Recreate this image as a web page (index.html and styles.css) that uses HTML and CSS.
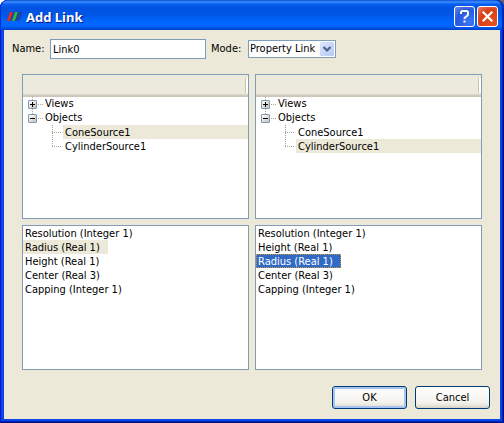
FILE: index.html
```html
<!DOCTYPE html>
<html lang="en">
<head>
<meta charset="utf-8">
<meta name="viewport" content="width=device-width, initial-scale=1">
<title>Add Link</title>
<link rel="stylesheet" href="styles.css">
</head>
<body>
<main class="window">
  <header class="titlebar">
    <svg class="app-icon" width="16" height="16" viewBox="0 0 16 16" aria-hidden="true">
      <path d="M4 3h3L4 12H1z" fill="#f02818"/>
      <path d="M9 3h3L9 12H6z" fill="#30b838"/>
      <path d="M13 3h2l-3 9h-2z" fill="#1848c0"/>
      <path d="M7 3h1L5 12H4zM12 3h1l-3 9H9zM15 3h1l-3 9h-1z" fill="#303868"/>
    </svg>
    <h1 class="title">Add Link</h1>
    <button class="caption-button help" type="button" aria-label="Help">
      <svg width="19" height="19" viewBox="0 0 19 19" aria-hidden="true">
        <path d="M6 7V5.500Q6 4 7.500 4H11.500Q13 4 13 5.500V7Q13 8 12 9L10.500 10Q9.500 10.700 9.500 12" fill="none" stroke="#fff" stroke-width="2"/>
        <path d="M8.500 13.500h2v2h-2z" fill="#fff"/>
      </svg>
    </button>
    <button class="caption-button close" type="button" aria-label="Close">
      <svg width="19" height="19" viewBox="0 0 19 19" aria-hidden="true">
        <path d="M5.500 5.500l8 8M13.500 5.500l-8 8" fill="none" stroke="#fff" stroke-width="2.200" stroke-linecap="square"/>
      </svg>
    </button>
  </header>
  <form class="content">
    <div class="fields">
      <label class="name-label" for="name">Name:</label>
      <input class="name" id="name" type="text" value="Link0">
      <label class="mode-label" for="mode">Mode:</label>
      <span class="combo">
        <select class="mode" id="mode"><option>Property Link</option></select>
        <svg class="arrow" width="14" height="14" viewBox="0 0 14 14" aria-hidden="true">
          <path d="M3.500 5L7 8.500 10.500 5" fill="none" stroke="#4d6185" stroke-width="2.200"/>
        </svg>
      </span>
    </div>
    <div class="panels">
      <section class="panel">
        <div class="tree-header"></div>
        <ul class="tree">
          <li class="node"><button class="expander plus" type="button" aria-label="Expand Views"></button><span class="caption">Views</span></li>
          <li class="node"><button class="expander" type="button" aria-label="Collapse Objects"></button><span class="caption">Objects</span></li>
          <li class="leaf"><span class="branch"></span><span class="leaf-text current">ConeSource1</span></li>
          <li class="leaf"><span class="branch last"></span><span class="leaf-text">CylinderSource1</span></li>
        </ul>
      </section>
      <section class="panel">
        <div class="tree-header"></div>
        <ul class="tree">
          <li class="node"><button class="expander plus" type="button" aria-label="Expand Views"></button><span class="caption">Views</span></li>
          <li class="node"><button class="expander" type="button" aria-label="Collapse Objects"></button><span class="caption">Objects</span></li>
          <li class="leaf"><span class="branch"></span><span class="leaf-text">ConeSource1</span></li>
          <li class="leaf"><span class="branch last"></span><span class="leaf-text current">CylinderSource1</span></li>
        </ul>
      </section>
      <ul class="panel list" role="listbox" aria-label="First object properties">
        <li class="item" role="option">Resolution (Integer 1)</li>
        <li class="item current" role="option" aria-selected="true">Radius (Real 1)</li>
        <li class="item" role="option">Height (Real 1)</li>
        <li class="item" role="option">Center (Real 3)</li>
        <li class="item" role="option">Capping (Integer 1)</li>
      </ul>
      <ul class="panel list" role="listbox" aria-label="Second object properties">
        <li class="item" role="option">Resolution (Integer 1)</li>
        <li class="item" role="option">Height (Real 1)</li>
        <li class="item selected" role="option" aria-selected="true">Radius (Real 1)</li>
        <li class="item" role="option">Center (Real 3)</li>
        <li class="item" role="option">Capping (Integer 1)</li>
      </ul>
    </div>
    <div class="actions">
      <button class="push default" type="button">OK</button>
      <button class="push" type="button">Cancel</button>
    </div>
  </form>
</main>
</body>
</html>
```
FILE: styles.css
```css
* { box-sizing: border-box; }

body {
  margin: 0;
  background: linear-gradient(90deg, #fff 50%, #5c6070 50%);
  color: #000;
  font: 11px/16px Tahoma, "DejaVu Sans Condensed", sans-serif;
}

button, input, select { font: inherit; color: inherit; }

ul { margin: 0; padding: 0; list-style: none; }

.window {
  display: flex;
  flex-direction: column;
  min-height: 100vh;
  padding: 0 4px 4px;
  border-radius: 8px 8px 0 0;
  background: #0a46e4;
  box-shadow: inset 1px 0 #0019cf, inset -1px 0 #00107c, inset -2px 0 #0020b8, inset 0 -1px #00107c, inset 0 -2px #0020b8;
}

.titlebar {
  display: flex;
  align-items: center;
  gap: 2px;
  height: 30px;
  margin: 0 -4px;
  padding: 3px 6px 0;
  border-radius: 8px 8px 0 0;
  background: linear-gradient(#0a50d8 0, #3c90ff 2px, #0a5ef0 4px, #0053e1 8px, #0055e5 14px, #0066ff 22px, #0066ff 26px, #0040c8 30px);
  box-shadow: inset 1px 0 #0030d0, inset -2px 0 #0028b8;
}

.app-icon { flex: none; }

.title {
  flex: 1;
  margin: 0;
  padding-left: 2px;
  color: #fff;
  font: bold 13px/20px "Trebuchet MS", "Noto Sans", sans-serif;
  text-shadow: 1px 1px #0a1883;
}

.caption-button {
  flex: none;
  width: 21px;
  height: 21px;
  padding: 0;
  border: 1px solid #fff;
  border-radius: 3px;
}

.caption-button svg { display: block; }

.help { background: radial-gradient(circle at 75% 80%, #3a78f8, #2858dc 60%, #6888e8); }

.close { background: radial-gradient(circle at 75% 80%, #e85020, #d84018 60%, #e88068); }

.content {
  display: flex;
  flex: 1;
  flex-direction: column;
  padding: 9px 10px 10px 8px;
  background: #ece9d8;
}

.fields { display: flex; align-items: center; }

.name-label { width: 38px; }

.name {
  width: 156px;
  height: 20px;
  padding: 0 2px;
  border: 1px solid #7f9db9;
  background: #fff;
}

.mode-label { width: 42px; padding-left: 5px; }

.combo { position: relative; display: flex; }

.mode {
  width: 88px;
  height: 18px;
  padding: 0 0 0 1px;
  border: 1px solid #7f9db9;
  border-radius: 0;
  background: #fff;
  appearance: none;
}

.arrow {
  position: absolute;
  top: 2px;
  right: 2px;
  border-radius: 1px;
  background: linear-gradient(135deg, #dce6fe, #b4c8f6);
  pointer-events: none;
}

.panels {
  display: grid;
  flex: 1;
  grid-template-columns: 1fr 1fr;
  grid-template-rows: 1fr 1fr;
  gap: 6px;
  margin: 15px 8px 16px 10px;
}

.panel { border: 1px solid #7f9db9; background: #fff; }

.tree-header {
  display: flex;
  justify-content: flex-end;
  height: 22px;
  padding: 3px 0 4px;
  background: linear-gradient(#ebeadb 19px, #dedbc9 19px, #d6d2c2 20px, #cbc7b8 21px);
}

.tree-header::after {
  width: 2px;
  border-left: 1px solid #c7c5b2;
  background: #fff;
  content: "";
}

.node {
  display: flex;
  align-items: center;
  height: 14px;
  padding-left: 5px;
  background: repeating-linear-gradient(#aca899 0 1px, transparent 1px 2px) 9px 0 / 1px 14px no-repeat;
}

.node:nth-child(2) { background-size: 1px 3px; }

.expander {
  width: 9px;
  height: 9px;
  padding: 0;
  border: 1px solid #7898b5;
  border-radius: 1px;
  background:
    linear-gradient(#000, #000) center / 5px 1px no-repeat,
    linear-gradient(135deg, #fff, #c8c2b4);
}

.plus {
  background:
    linear-gradient(#000, #000) center / 5px 1px no-repeat,
    linear-gradient(#000, #000) center / 1px 5px no-repeat,
    linear-gradient(135deg, #fff, #c8c2b4);
}

.node .caption { display: flex; align-items: center; height: 16px; }

.caption::before {
  width: 6px;
  height: 1px;
  margin: 0 2px 0 0;
  background: repeating-linear-gradient(90deg, transparent 0 1px, #aca899 1px 2px);
  content: "";
}

.leaf { display: flex; height: 14px; padding-left: 29px; }

.branch {
  width: 11px;
  background:
    repeating-linear-gradient(#aca899 0 1px, transparent 1px 2px) left / 1px 14px no-repeat,
    repeating-linear-gradient(90deg, #aca899 0 1px, transparent 1px 2px) 0 7px / 10px 1px no-repeat;
}

.last {
  background:
    repeating-linear-gradient(#aca899 0 1px, transparent 1px 2px) left top / 1px 8px no-repeat,
    repeating-linear-gradient(90deg, #aca899 0 1px, transparent 1px 2px) 0 7px / 10px 1px no-repeat;
}

.leaf-text { flex: 1; padding-left: 2px; }

.current { background: #ece9d8; }

.item { width: fit-content; height: 14px; padding: 0 8px 0 2px; }

.selected {
  background: #316ac5;
  color: #fff;
  outline: 1px dotted #ce953a;
  outline-offset: -1px;
}

.actions { display: flex; justify-content: flex-end; gap: 8px; }

.push {
  width: 75px;
  height: 23px;
  padding: 0;
  border: 1px solid #003c74;
  border-radius: 3px;
  background: linear-gradient(#fff, #f4f3ee 70%, #ece8df 85%, #d6d0c5);
}

.default { box-shadow: inset 0 0 0 2px #a8c4f0, inset 0 -1px #6982ee; }
```
